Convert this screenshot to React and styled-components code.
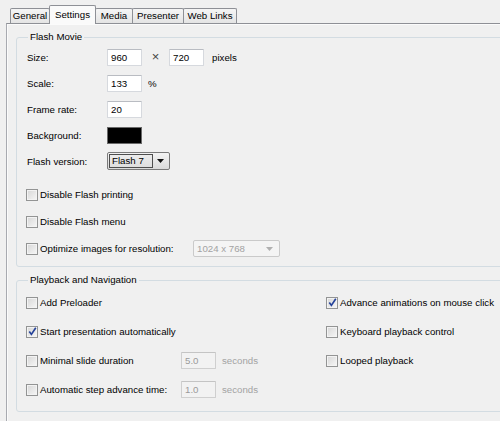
import React from 'react';
import styled, { createGlobalStyle } from 'styled-components';

const Global = createGlobalStyle`
  html, body { margin: 0; padding: 0; background: #f0f0f0; }
  body { font-family: "Liberation Sans", Arial, sans-serif; font-size: 9.7px; color: #000; }
`;

const Window = styled.div`
  width: 500px;
  height: 421px;
  overflow: hidden;
  background: #f0f0f0;
  display: flex;
  flex-direction: column;
`;

const TabStrip = styled.div`
  display: flex;
  align-items: flex-end;
  height: 23px;
  padding-left: 10px;
  position: relative;
  z-index: 1;
`;

const Tab = styled.div`
  box-sizing: border-box;
  width: ${p => p.$w}px;
  height: ${p => (p.$active ? 19 : 15)}px;
  margin-bottom: ${p => (p.$active ? -1 : 0)}px;
  margin-left: ${p => (p.$first ? 0 : -1)}px;
  border: 1px solid #8e9096;
  border-bottom: none;
  border-radius: 2px 2px 0 0;
  background: ${p => (p.$active ? '#fafafa' : 'linear-gradient(#f5f5f5, #e4e4e4)')};
  position: relative;
  z-index: ${p => (p.$active ? 2 : 1)};
  display: flex;
  align-items: ${p => (p.$active ? 'flex-start' : 'center')};
  padding-top: ${p => (p.$active ? 3 : 0)}px;
  justify-content: center;
  line-height: 12px;
  white-space: nowrap;
`;

const Panel = styled.div`
  flex: 1;
  margin-left: 6px;
  border-top: 1px solid #8e9096;
  border-left: 1px solid #a8aab0;
  box-shadow: inset 1px 1px 0 #fbfbfb;
  padding: 7px 0 0 9px;
  display: flex;
  flex-direction: column;
  gap: 7px;
`;

const Group = styled.fieldset`
  margin: 0;
  width: 520px;
  box-sizing: border-box;
  min-width: 0;
  border: 1px solid #d3dce2;
  border-radius: 3px;
  padding: ${p => p.$pad};
`;

const Legend = styled.legend`
  margin-left: 2px;
  padding: 0 2px;
  line-height: 12px;
  font-size: 9.7px;
`;

const Row = styled.div`
  display: flex;
  align-items: center;
  height: ${p => p.$h}px;
  margin-top: ${p => p.$mt || 0}px;
`;

const Label = styled.span`
  width: 81px;
  padding-left: 1px;
  box-sizing: border-box;
  flex: none;
`;

const TextBox = styled.input`
  box-sizing: border-box;
  width: 35px;
  height: 17px;
  margin: 0;
  padding: 0 3px;
  font-family: inherit;
  font-size: 9.7px;
  color: ${p => (p.disabled ? '#9a9a9a' : '#000')};
  background: ${p => (p.disabled ? '#f2f2f2' : '#fff')};
  border: 1px solid ${p => (p.disabled ? '#cfcfcf' : '#d6d9de')};
  border-top-color: ${p => (p.disabled ? '#c4c4c4' : '#b9bcc2')};
  border-radius: 1px;
  outline: none;
`;

const Times = styled.span`
  width: 27px;
  text-align: center;
  font-size: 13px;
  line-height: 12px;
  color: #444;
`;

const Unit = styled.span`
  margin-left: ${p => p.$ml}px;
  color: ${p => (p.$muted ? '#a3a3a3' : '#000')};
`;

const Swatch = styled.div`
  width: 35px;
  height: 17px;
  box-sizing: border-box;
  background: #000;
  border: 1px solid #6a6a6a;
`;

const Combo = styled.div`
  box-sizing: border-box;
  width: 63px;
  height: 18px;
  border: 1px solid #7a7a7a;
  border-radius: 2px;
  background: linear-gradient(#f3f3f3, #dadada);
  display: flex;
  align-items: stretch;
  padding: 1px;
`;

const ComboText = styled.span`
  flex: 1;
  border: 1px solid #4e4e4e;
  padding-left: 2px;
  line-height: 12px;
  background: linear-gradient(#ececec, #dedede);
`;

const ComboArrow = styled.span`
  width: 15px;
  display: flex;
  align-items: center;
  justify-content: center;
`;

const DisabledCombo = styled.div`
  box-sizing: border-box;
  width: 87px;
  height: 17px;
  border: 1px solid #cacaca;
  border-radius: 2px;
  background: #f4f4f4;
  color: #a3a3a3;
  display: flex;
  align-items: center;
  justify-content: space-between;
  padding: 0 6px 0 3px;
`;

const CheckItem = styled.label`
  display: flex;
  align-items: center;
  gap: 2px;
  width: ${p => (p.$w ? `${p.$w}px` : 'auto')};
  flex: none;
  white-space: nowrap;
`;

const Box = styled.span`
  box-sizing: border-box;
  width: 12px;
  height: 12px;
  border: 1px solid #939494;
  background: linear-gradient(135deg, #d6d6d6, #f7f7f7);
  box-shadow: inset 0 0 0 1px #f3f3f3;
  display: flex;
  align-items: center;
  justify-content: center;
  flex: none;
`;

const NavGrid = styled.div`
  display: grid;
  grid-template-columns: 155px 35px 110px 1fr;
  grid-auto-rows: 29px;
  align-items: center;
`;

const Seconds = styled.span`
  padding-left: 6px;
  color: #a3a3a3;
`;

const Arrow = ({ color }) => (
  <svg width="7" height="4" viewBox="0 0 7 4">
    <path d="M0 0 H7 L3.5 4 Z" fill={color} />
  </svg>
);

const Check = ({ checked, children, w }) => (
  <CheckItem $w={w}>
    <Box>
      {checked && (
        <svg width="9" height="9" viewBox="0 0 9 9">
          <path d="M1.3 4.6 L3.4 7.4 L7.8 0.8" stroke="#24429a" strokeWidth="1.7" fill="none" />
        </svg>
      )}
    </Box>
    <span>{children}</span>
  </CheckItem>
);

const tabs = [
  { label: 'General', w: 40 },
  { label: 'Settings', w: 47, active: true },
  { label: 'Media', w: 38 },
  { label: 'Presenter', w: 52 },
  { label: 'Web Links', w: 54 },
];

export default function App() {
  return (
    <>
      <Global />
      <Window>
        <TabStrip>
          {tabs.map((t, i) => (
            <Tab key={t.label} $w={t.w} $active={t.active} $first={i === 0}>
              {t.label}
            </Tab>
          ))}
        </TabStrip>
        <Panel>
          <Group $pad="1px 0 4px 9px">
            <Legend>Flash Movie</Legend>
            <Row $h={26}>
              <Label>Size:</Label>
              <TextBox readOnly defaultValue="960" />
              <Times>×</Times>
              <TextBox readOnly defaultValue="720" />
              <Unit $ml={8}>pixels</Unit>
            </Row>
            <Row $h={26}>
              <Label>Scale:</Label>
              <TextBox readOnly defaultValue="133" />
              <Unit $ml={6}>%</Unit>
            </Row>
            <Row $h={26}>
              <Label>Frame rate:</Label>
              <TextBox readOnly defaultValue="20" />
            </Row>
            <Row $h={26}>
              <Label>Background:</Label>
              <Swatch />
            </Row>
            <Row $h={26}>
              <Label>Flash version:</Label>
              <Combo>
                <ComboText>Flash 7</ComboText>
                <ComboArrow>
                  <Arrow color="#111" />
                </ComboArrow>
              </Combo>
            </Row>
            <Row $h={27} $mt={7}>
              <Check>Disable Flash printing</Check>
            </Row>
            <Row $h={27}>
              <Check>Disable Flash menu</Check>
            </Row>
            <Row $h={27}>
              <Check w={167}>Optimize images for resolution:</Check>
              <DisabledCombo>
                <span>1024 x 768</span>
                <Arrow color="#b0b0b0" />
              </DisabledCombo>
            </Row>
          </Group>
          <Group $pad="2px 0 7px 9px">
            <Legend>Playback and Navigation</Legend>
            <NavGrid>
              <Check>Add Preloader</Check>
              <span />
              <span />
              <Check checked>Advance animations on mouse click</Check>

              <Check checked>Start presentation automatically</Check>
              <span />
              <span />
              <Check>Keyboard playback control</Check>

              <Check>Minimal slide duration</Check>
              <TextBox disabled readOnly defaultValue="5.0" />
              <Seconds>seconds</Seconds>
              <Check>Looped playback</Check>

              <Check>Automatic step advance time:</Check>
              <TextBox disabled readOnly defaultValue="1.0" />
              <Seconds>seconds</Seconds>
              <span />
            </NavGrid>
          </Group>
        </Panel>
      </Window>
    </>
  );
}
